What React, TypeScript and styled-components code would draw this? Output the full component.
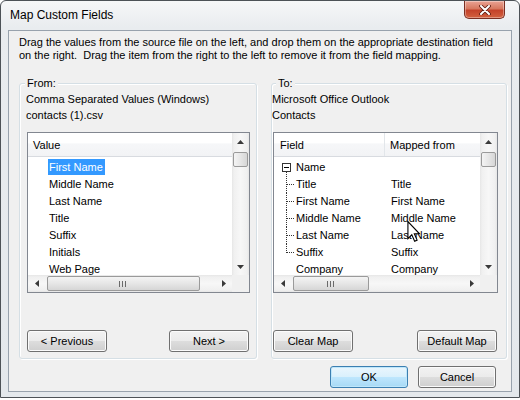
import React from 'react';
import styled, { createGlobalStyle } from 'styled-components';

const GlobalStyle = createGlobalStyle`
  html, body {
    margin: 0;
    padding: 0;
    background: #ffffff;
  }
  body {
    font-family: "Liberation Sans", Arial, sans-serif;
    font-size: 11px;
    color: #000;
  }
`;

const Window = styled.div`
  position: relative;
  box-sizing: border-box;
  width: 520px;
  height: 398px;
  display: flex;
  flex-direction: column;
  padding: 0 7px 5px;
  border: 1px solid #4d5257;
  border-radius: 6px 6px 0 0;
  background: linear-gradient(180deg, #f6f7f8 0px, #e9ecef 26px, #e4e8ec 100%);
`;

const TitleBar = styled.div`
  height: 29px;
  display: flex;
  align-items: flex-start;
  justify-content: space-between;
  padding-left: 2px;
`;

const Title = styled.div`
  margin-top: 6px;
  line-height: 16px;
  font-size: 12px;
  color: #000;
`;

const CloseButton = styled.div`
  width: 41px;
  height: 18px;
  box-sizing: border-box;
  margin-right: 7px;
  display: flex;
  align-items: center;
  justify-content: center;
  border: 1px solid #7a2e22;
  border-top: none;
  border-radius: 0 0 5px 5px;
  background: linear-gradient(180deg, #eaa394 0%, #d7785f 45%, #c4422a 55%, #d2613f 100%);
  box-shadow: inset 0 0 0 1px rgba(255, 255, 255, 0.35);
`;

const Client = styled.div`
  flex: 1;
  display: flex;
  flex-direction: column;
  border: 1px solid #98a2ad;
  background: #f0f0f0;
  padding: 5px 4px 0 10px;
`;

const Instructions = styled.div`
  line-height: 13px;
  white-space: nowrap;
`;

const Groups = styled.div`
  display: grid;
  grid-template-columns: 238px 236px;
  column-gap: 14px;
  margin-top: 21px;
`;

const GroupBox = styled.div<{ $padLeft: number; $padRight: number }>`
  box-sizing: border-box;
  display: flex;
  flex-direction: column;
  padding: 0 ${p => p.$padRight}px 6px ${p => p.$padLeft}px;
  border: 1px solid #d5dfe5;
  border-radius: 3px;
  box-shadow: 1px 1px 0 #ffffff, inset 1px 1px 0 #ffffff;
`;

const Legend = styled.div<{ $offset: number }>`
  align-self: flex-start;
  margin: -9px 0 0 ${p => p.$offset}px;
  padding: 0 2px;
  line-height: 16px;
  background: #f0f0f0;
`;

const Caption = styled.div`
  line-height: 16px;
  white-space: nowrap;
`;

const ListBox = styled.div`
  margin: 9px 0 0 1px;
  height: 161px;
  box-sizing: border-box;
  border: 1px solid #828790;
  background: #ffffff;
  display: grid;
  grid-template-columns: minmax(0, 1fr) 17px;
  grid-template-rows: minmax(0, 1fr) 17px;
`;

const ListContent = styled.div`
  grid-column: 1;
  grid-row: 1;
  overflow: hidden;
  display: flex;
  flex-direction: column;
`;

const Header = styled.div<{ $columns: string }>`
  flex: none;
  height: 23px;
  display: grid;
  grid-template-columns: ${p => p.$columns};
  border-bottom: 1px solid #d8dbe0;
  background: linear-gradient(180deg, #ffffff 0%, #ffffff 45%, #f6f7f9 46%, #f2f3f5 100%);
`;

const HeaderCell = styled.div<{ $pad: number; $divider?: boolean }>`
  padding: 2px 0 0 ${p => p.$pad}px;
  line-height: 21px;
  border-right: ${p => (p.$divider ? '1px solid #e2e6ea' : 'none')};
  white-space: nowrap;
`;

const Rows = styled.div`
  padding-top: 2px;
  display: flex;
  flex-direction: column;
`;

const ValueRow = styled.div`
  flex: none;
  height: 17px;
  padding-left: 20px;
  display: flex;
  align-items: flex-start;
`;

const ItemText = styled.span<{ $selected?: boolean }>`
  padding: 0 2px 0 1px;
  line-height: 16px;
  white-space: nowrap;
  color: ${p => (p.$selected ? '#ffffff' : '#000000')};
  background: ${p => (p.$selected ? '#3399ff' : 'transparent')};
`;

const MapRow = styled.div`
  flex: none;
  height: 17px;
  display: grid;
  grid-template-columns: 111px 1fr;
  line-height: 16px;
  white-space: nowrap;
`;

const FieldCell = styled.div`
  display: flex;
  align-items: flex-start;
`;

const Gutter = styled.svg`
  flex: none;
  width: 22px;
  height: 17px;
  display: block;
`;

const MappedCell = styled.div`
  padding-left: 6px;
`;

const VScroll = styled.div`
  grid-column: 2;
  grid-row: 1;
  display: flex;
  flex-direction: column;
  background: linear-gradient(90deg, #e6e6e6 0, #f0f0f0 2px, #f7f7f7 50%, #f0f0f0 calc(100% - 2px), #e6e6e6 100%);
`;

const HScroll = styled.div`
  grid-column: 1;
  grid-row: 2;
  display: flex;
  align-items: stretch;
  background: linear-gradient(180deg, #e6e6e6 0, #f0f0f0 2px, #f7f7f7 50%, #f0f0f0 calc(100% - 2px), #e6e6e6 100%);
`;

const Corner = styled.div`
  grid-column: 2;
  grid-row: 2;
  background: #f0f0f0;
`;

const ArrowButton = styled.div`
  flex: none;
  width: 17px;
  height: 17px;
  display: flex;
  align-items: center;
  justify-content: center;
`;

const Spacer = styled.div`
  flex: 1;
`;

const VThumb = styled.div`
  flex: none;
  height: 15px;
  margin: 2px 1px 0;
  box-sizing: border-box;
  border: 1px solid #9a9a9a;
  border-radius: 2px;
  background: linear-gradient(90deg, #f4f4f4 0%, #e6e6e6 50%, #d6d6d6 100%);
`;

const HThumb = styled.div<{ $width: number }>`
  flex: none;
  width: ${p => p.$width}px;
  margin: 1px 0 1px 2px;
  box-sizing: border-box;
  border: 1px solid #9a9a9a;
  border-radius: 2px;
  background: linear-gradient(180deg, #f4f4f4 0%, #e6e6e6 50%, #d6d6d6 100%);
  display: flex;
  align-items: center;
  justify-content: center;
`;

const ButtonRow = styled.div`
  display: flex;
  justify-content: space-between;
  margin: 37px 1px 0 1px;
`;

const Button = styled.button<{ $primary?: boolean; $width?: number }>`
  width: ${p => p.$width ?? 80}px;
  height: 22px;
  box-sizing: border-box;
  padding: 0;
  font-family: inherit;
  font-size: 11px;
  color: #000;
  border: 1px solid ${p => (p.$primary ? '#3c7fb1' : '#707070')};
  border-radius: 3px;
  box-shadow: inset 0 0 0 1px ${p => (p.$primary ? '#bfe7fb' : '#fbfbfb')};
  background: ${p =>
    p.$primary
      ? 'linear-gradient(180deg, #eaf6fd 0%, #d9f0fc 50%, #bee6fd 51%, #a7d9f5 100%)'
      : 'linear-gradient(180deg, #f2f2f2 0%, #ebebeb 50%, #dddddd 51%, #cfcfcf 100%)'};
`;

const DialogButtons = styled.div`
  display: flex;
  justify-content: flex-end;
  gap: 10px;
  margin-top: 7px;
  padding-right: 11px;
`;

const Cursor = styled.svg`
  position: absolute;
  left: 406px;
  top: 220px;
  width: 14px;
  height: 21px;
`;

const Arrow = ({ dir }: { dir: 'up' | 'down' | 'left' | 'right' }) => {
  const points = {
    up: '3.5,0 7,4 0,4',
    down: '0,0 7,0 3.5,4',
    left: '4,0 4,7 0,3.5',
    right: '0,0 4,3.5 0,7',
  }[dir];
  const vertical = dir === 'up' || dir === 'down';
  return (
    <svg width={vertical ? 7 : 4} height={vertical ? 4 : 7}>
      <polygon points={points} fill="#3a3a3a" />
    </svg>
  );
};

const Grip = () => (
  <svg width="9" height="6">
    {[0.5, 3.5, 6.5].map(x => (
      <line key={x} x1={x} y1="0" x2={x} y2="6" stroke="#6a6a6a" strokeWidth="1" />
    ))}
  </svg>
);

const Scrollbars = ({ thumb }: { thumb: number }) => (
  <>
    <VScroll>
      <ArrowButton><Arrow dir="up" /></ArrowButton>
      <VThumb />
      <Spacer />
      <ArrowButton><Arrow dir="down" /></ArrowButton>
    </VScroll>
    <HScroll>
      <ArrowButton><Arrow dir="left" /></ArrowButton>
      <HThumb $width={thumb}><Grip /></HThumb>
      <Spacer />
      <ArrowButton><Arrow dir="right" /></ArrowButton>
    </HScroll>
    <Corner />
  </>
);

type TreeKind = 'root' | 'child' | 'last' | 'none';

const TreeLines = ({ kind }: { kind: TreeKind }) => (
  <Gutter>
    {kind === 'root' && (
      <>
        <line x1="12.5" y1="13" x2="12.5" y2="17" stroke="#333" strokeDasharray="1 1" />
        <rect x="8.5" y="4.5" width="8" height="8" fill="#fff" stroke="#333" />
        <line x1="10" y1="8.5" x2="15" y2="8.5" stroke="#000" />
      </>
    )}
    {(kind === 'child' || kind === 'last') && (
      <>
        <line x1="12.5" y1="0" x2="12.5" y2={kind === 'last' ? 9 : 17} stroke="#333" strokeDasharray="1 1" />
        <line x1="13" y1="8.5" x2="21" y2="8.5" stroke="#333" strokeDasharray="1 1" />
      </>
    )}
  </Gutter>
);

const sourceValues = ['First Name', 'Middle Name', 'Last Name', 'Title', 'Suffix', 'Initials', 'Web Page'];

const mappings: { field: string; mapped: string; kind: TreeKind }[] = [
  { field: 'Name', mapped: '', kind: 'root' },
  { field: 'Title', mapped: 'Title', kind: 'child' },
  { field: 'First Name', mapped: 'First Name', kind: 'child' },
  { field: 'Middle Name', mapped: 'Middle Name', kind: 'child' },
  { field: 'Last Name', mapped: 'Last Name', kind: 'child' },
  { field: 'Suffix', mapped: 'Suffix', kind: 'last' },
  { field: 'Company', mapped: 'Company', kind: 'none' },
];

const App: React.FC = () => {
  return (
    <>
      <GlobalStyle />
      <Window>
        <TitleBar>
          <Title>Map Custom Fields</Title>
          <CloseButton>
            <svg width="12" height="10" viewBox="0 0 12 10">
              <path
                d="M2 1 L10 9 M10 1 L2 9"
                stroke="#5a1a10"
                strokeWidth="3.6"
                strokeLinecap="round"
              />
              <path
                d="M2 1 L10 9 M10 1 L2 9"
                stroke="#ffffff"
                strokeWidth="2"
                strokeLinecap="round"
              />
            </svg>
          </CloseButton>
        </TitleBar>

        <Client>
          <Instructions>
            Drag the values from the source file on the left, and drop them on the appropriate destination field
            <br />
            on the right.&nbsp; Drag the item from the right to the left to remove it from the field mapping.
          </Instructions>

          <Groups>
            <GroupBox $padLeft={6} $padRight={6}>
              <Legend $offset={-1}>From:</Legend>
              <Caption>Comma Separated Values (Windows)</Caption>
              <Caption>contacts (1).csv</Caption>
              <ListBox>
                <ListContent>
                  <Header $columns="1fr">
                    <HeaderCell $pad={5}>Value</HeaderCell>
                  </Header>
                  <Rows>
                    {sourceValues.map((value, i) => (
                      <ValueRow key={value}>
                        <ItemText $selected={i === 0}>{value}</ItemText>
                      </ValueRow>
                    ))}
                  </Rows>
                </ListContent>
                <Scrollbars thumb={153} />
              </ListBox>
              <ButtonRow>
                <Button>&lt; Previous</Button>
                <Button>Next &gt;</Button>
              </ButtonRow>
            </GroupBox>

            <GroupBox $padLeft={0} $padRight={8}>
              <Legend $offset={4}>To:</Legend>
              <Caption>Microsoft Office Outlook</Caption>
              <Caption>Contacts</Caption>
              <ListBox>
                <ListContent>
                  <Header $columns="111px 1fr">
                    <HeaderCell $pad={6} $divider>Field</HeaderCell>
                    <HeaderCell $pad={5}>Mapped from</HeaderCell>
                  </Header>
                  <Rows>
                    {mappings.map(m => (
                      <MapRow key={m.field}>
                        <FieldCell>
                          <TreeLines kind={m.kind} />
                          <span>{m.field}</span>
                        </FieldCell>
                        <MappedCell>{m.mapped}</MappedCell>
                      </MapRow>
                    ))}
                  </Rows>
                </ListContent>
                <Scrollbars thumb={76} />
              </ListBox>
              <ButtonRow>
                <Button>Clear Map</Button>
                <Button>Default Map</Button>
              </ButtonRow>
            </GroupBox>
          </Groups>

          <DialogButtons>
            <Button $primary $width={78}>OK</Button>
            <Button $width={78}>Cancel</Button>
          </DialogButtons>
        </Client>

        <Cursor viewBox="0 0 12 19">
          <path
            d="M0.5 0.5 L0.5 16 L4 12.5 L6.6 18.3 L8.8 17.3 L6.3 11.6 L11 11.6 Z"
            fill="#ffffff"
            stroke="#000000"
            strokeWidth="1"
            strokeLinejoin="miter"
          />
        </Cursor>
      </Window>
    </>
  );
};

export default App;
